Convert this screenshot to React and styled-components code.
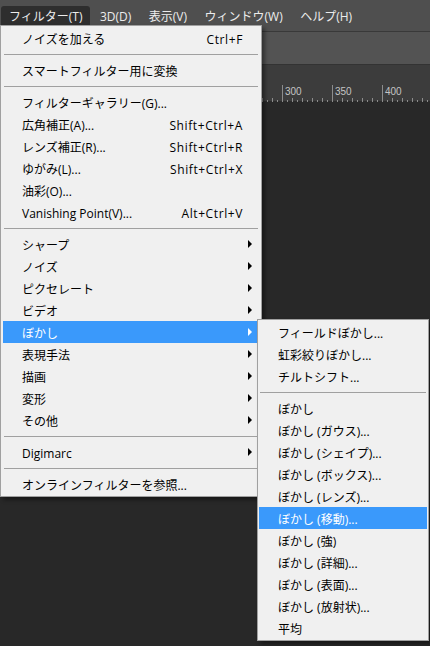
import React from "react";
import styled, { createGlobalStyle } from "styled-components";

const GlobalStyle = createGlobalStyle`
  html, body {
    margin: 0;
    padding: 0;
    background: #282828;
    overflow: hidden;
  }
  * {
    box-sizing: border-box;
  }
`;

const Page = styled.div`
  position: relative;
  width: 430px;
  height: 646px;
  display: flex;
  flex-direction: column;
  font-family: "Open Sans", "Noto Sans CJK JP", sans-serif;
  font-size: 12px;
  background: #282828;
`;

const MenuBar = styled.div`
  height: 32px;
  display: flex;
  align-items: flex-start;
  padding: 6px 0 0 1px;
  background: #4f4f4f;
  border-bottom: 1px solid #393939;
`;

const BarItem = styled.div`
  height: 26px;
  padding: 1px 8px 0;
  margin-right: 1.5px;
  line-height: 20px;
  color: #ececec;
  white-space: nowrap;
  border-radius: 3px 3px 0 0;
  background: ${(p) => (p.$open ? "#2e2e2e" : "transparent")};
`;

const Toolbar = styled.div`
  height: 33px;
  background: #535353;
  border-bottom: 1px solid #333;
`;

const TabStrip = styled.div`
  height: 19px;
  background: #3c3c3c;
`;

const RulerBox = styled.div`
  height: 18px;
  background: #3c3c3c;
  border-bottom: 1px solid #2a2a2a;
`;

const Canvas = styled.div`
  flex: 1;
  background: #282828;
`;

const Menu = styled.div`
  position: absolute;
  left: ${(p) => p.$left}px;
  top: ${(p) => p.$top}px;
  width: ${(p) => p.$width}px;
  padding: 1px ${(p) => p.$padX}px 1px;
  background: #f0f0f0;
  border: 1px solid #a0a0a0;
  box-shadow: 3px 3px 4px rgba(0, 0, 0, 0.4);
  color: #000;
`;

const Row = styled.div`
  height: 22px;
  display: flex;
  align-items: center;
  padding: 2px 0 0 19px;
  white-space: nowrap;
  background: ${(p) => (p.$active ? "#3a99fb" : "transparent")};
  color: ${(p) => (p.$active ? "#fff" : "#000")};
`;

const Label = styled.span`
  flex: 1;
`;

const Shortcut = styled.span`
  letter-spacing: 0.6px;
`;

const ArrowCell = styled.span`
  width: 16px;
  height: 20px;
  display: flex;
  align-items: center;
  padding: 0 0 2px 5px;
`;

const Arrow = styled.span`
  width: 0;
  height: 0;
  border-top: 4px solid transparent;
  border-bottom: 4px solid transparent;
  border-left: 4px solid ${(p) => (p.$active ? "#fff" : "#000")};
`;

const Separator = styled.div`
  height: 1px;
  margin: 5px 1px 4px;
  background: #a0a0a0;
`;

const barItems = ["フィルター(T)", "3D(D)", "表示(V)", "ウィンドウ(W)", "ヘルプ(H)"];

const filterItems = [
  { label: "ノイズを加える", shortcut: "Ctrl+F" },
  { sep: true },
  { label: "スマートフィルター用に変換" },
  { sep: true },
  { label: "フィルターギャラリー(G)..." },
  { label: "広角補正(A)...", shortcut: "Shift+Ctrl+A" },
  { label: "レンズ補正(R)...", shortcut: "Shift+Ctrl+R" },
  { label: "ゆがみ(L)...", shortcut: "Shift+Ctrl+X" },
  { label: "油彩(O)..." },
  { label: "Vanishing Point(V)...", shortcut: "Alt+Ctrl+V" },
  { sep: true },
  { label: "シャープ", sub: true },
  { label: "ノイズ", sub: true },
  { label: "ピクセレート", sub: true },
  { label: "ビデオ", sub: true },
  { label: "ぼかし", sub: true, active: true },
  { label: "表現手法", sub: true },
  { label: "描画", sub: true },
  { label: "変形", sub: true },
  { label: "その他", sub: true },
  { sep: true },
  { label: "Digimarc", sub: true },
  { sep: true },
  { label: "オンラインフィルターを参照..." },
];

const blurItems = [
  { label: "フィールドぼかし..." },
  { label: "虹彩絞りぼかし..." },
  { label: "チルトシフト..." },
  { sep: true },
  { label: "ぼかし" },
  { label: "ぼかし (ガウス)..." },
  { label: "ぼかし (シェイプ)..." },
  { label: "ぼかし (ボックス)..." },
  { label: "ぼかし (レンズ)..." },
  { label: "ぼかし (移動)...", active: true },
  { label: "ぼかし (強)" },
  { label: "ぼかし (詳細)..." },
  { label: "ぼかし (表面)..." },
  { label: "ぼかし (放射状)..." },
  { label: "平均" },
];

function Ruler() {
  // 300 sits at x=282, one pixel per unit
  const ticks = [];
  for (let x = 262; x <= 430; x += 5) {
    const unit = x + 18;
    let h = 2;
    if (unit % 50 === 0) h = 17;
    else if (unit % 10 === 0) h = 4;
    ticks.push(<line key={x} x1={x + 0.5} x2={x + 0.5} y1={18 - h} y2={18} stroke="#8c8c8c" />);
  }
  const labels = [300, 350, 400].map((n) => (
    <text key={n} x={n - 18 + 3} y={11} fill="#c4c4c4" fontSize="10" fontFamily="Liberation Sans, sans-serif">
      {n}
    </text>
  ));
  return (
    <svg width="430" height="18">
      {ticks}
      {labels}
    </svg>
  );
}

function MenuList({ items }) {
  return items.map((it, i) =>
    it.sep ? (
      <Separator key={i} />
    ) : (
      <Row key={i} $active={it.active}>
        <Label>{it.label}</Label>
        {it.shortcut && <Shortcut>{it.shortcut}</Shortcut>}
        <ArrowCell>{it.sub && <Arrow $active={it.active} />}</ArrowCell>
      </Row>
    )
  );
}

export default function App() {
  return (
    <Page>
      <GlobalStyle />
      <MenuBar>
        {barItems.map((t, i) => (
          <BarItem key={t} $open={i === 0}>
            {t}
          </BarItem>
        ))}
      </MenuBar>
      <Toolbar />
      <TabStrip />
      <RulerBox>
        <Ruler />
      </RulerBox>
      <Canvas />

      <Menu $left={0} $top={25} $width={262} $padX={2}>
        <MenuList items={filterItems} />
      </Menu>
      <Menu $left={257} $top={319} $width={172} $padX={1}>
        <MenuList items={blurItems} />
      </Menu>
    </Page>
  );
}
